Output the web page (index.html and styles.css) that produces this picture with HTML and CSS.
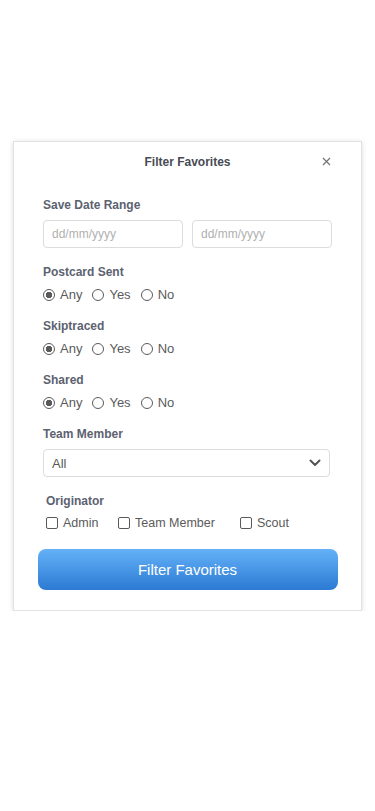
FILE: index.html
```html
<!DOCTYPE html>
<html lang="en">
<head>
  <meta charset="UTF-8" />
  <meta name="viewport" content="width=device-width, initial-scale=1.0"/>
  <title>Filter Favorites</title>
  <link rel="stylesheet" href="styles.css">
</head>
<body>

  <div class="modal">
    <div class="modal-header">
      <h2>Filter Favorites</h2>
      <button class="close" aria-label="Close">
        <svg width="9" height="9" viewBox="0 0 9 9"><path d="M1 1L8 8M8 1L1 8" stroke="#777" stroke-width="1.3" fill="none"/></svg>
      </button>
    </div>

    <div class="modal-body">
      <div class="group input-group">
        <div class="label date-label">Save Date Range</div>
        <div class="date-row">
          <input type="text" placeholder="dd/mm/yyyy" />
          <input type="text" placeholder="dd/mm/yyyy" />
        </div>
      </div>

      <div class="group">
        <div class="label">Postcard Sent</div>
        <div class="options">
          <label><input type="radio" name="postcard" checked /> Any</label>
          <label><input type="radio" name="postcard" /> Yes</label>
          <label><input type="radio" name="postcard" /> No</label>
        </div>
      </div>

      <div class="group">
        <div class="label">Skiptraced</div>
        <div class="options">
          <label><input type="radio" name="skip" checked /> Any</label>
          <label><input type="radio" name="skip" /> Yes</label>
          <label><input type="radio" name="skip" /> No</label>
        </div>
      </div>

      <div class="group">
        <div class="label">Shared</div>
        <div class="options">
          <label><input type="radio" name="shared" checked /> Any</label>
          <label><input type="radio" name="shared" /> Yes</label>
          <label><input type="radio" name="shared" /> No</label>
        </div>
      </div>

      <div class="group input-group">
        <div class="label date-label">Team Member</div>
        <div class="select-wrap">
          <select>
            <option>All</option>
          </select>
          <svg class="chevron" width="12" height="8" viewBox="0 0 12 8"><path d="M1.5 1.5L6 6L10.5 1.5" stroke="#555" stroke-width="2" fill="none" stroke-linecap="round" stroke-linejoin="round"/></svg>
        </div>
      </div>

      <div class="group originator">
        <div class="label">Originator</div>
        <div class="options checks">
          <label><input type="checkbox" /> Admin</label>
          <label><input type="checkbox" /> Team Member</label>
          <label><input type="checkbox" /> Scout</label>
        </div>
      </div>
    </div>

    <button class="submit">Filter Favorites</button>
  </div>

</body>
</html>
```

FILE: styles.css
```css
:root {
  --label: #5c6270;
  --text: #5a5a5a;
  --border: #dcdcdc;
}

* {
  box-sizing: border-box;
}

body {
  margin: 0;
  background: #fff;
  font-family: 'Liberation Sans', Arial, sans-serif;
  color: var(--text);
}

.modal {
  width: 349px;
  margin: 141px auto 0;
  background: #fff;
  border: 1px solid #e2e2e2;
  box-shadow: 0 1px 5px rgba(0,0,0,0.14);
  padding-bottom: 20px;
}

.modal-header {
  position: relative;
  padding-top: 12px;
}

.modal-header h2 {
  margin: 0;
  font-size: 12px;
  line-height: 16px;
  font-weight: bold;
  color: #474b54;
  text-align: center;
}

.close {
  position: absolute;
  top: 15px;
  right: 30px;
  padding: 0;
  border: none;
  background: transparent;
  line-height: 0;
  cursor: pointer;
}

.modal-body {
  padding: 27px 29px 0;
}

.group {
  margin-bottom: 15px;
}

.input-group {
  margin-bottom: 16px;
}

.label {
  font-size: 12px;
  line-height: 16px;
  font-weight: bold;
  color: var(--label);
  margin-bottom: 7px;
}

.date-row {
  display: flex;
  gap: 9px;
}

.date-row input {
  flex: 1;
  min-width: 0;
  height: 28px;
  padding: 0 8px;
  border: 1px solid var(--border);
  border-radius: 4px;
  font-family: inherit;
  font-size: 12px;
  color: var(--text);
}

.date-row input::placeholder {
  color: #b0b0b0;
}

.options {
  display: flex;
  gap: 10px;
  font-size: 13px;
  line-height: 16px;
}

.options label {
  display: flex;
  align-items: center;
  gap: 5px;
}

.options input {
  appearance: none;
  margin: 0;
  width: 12px;
  height: 12px;
  border: 1px solid #5a5a5a;
  background: #fff;
  flex-shrink: 0;
}

.options input[type="radio"] {
  border-radius: 50%;
}

.options input[type="radio"]:checked {
  background: radial-gradient(circle, #5a5a5a 0 3px, #fff 3.5px);
}

.options input[type="checkbox"] {
  border-radius: 2px;
}

.select-wrap {
  position: relative;
  width: 287px;
}

.select-wrap select {
  appearance: none;
  width: 100%;
  height: 28px;
  padding: 0 8px;
  border: 1px solid var(--border);
  border-radius: 4px;
  background: #fff;
  font-family: inherit;
  font-size: 13px;
  color: var(--text);
}

.chevron {
  position: absolute;
  right: 9px;
  top: 10px;
  pointer-events: none;
}

.originator {
  padding-left: 3px;
  margin-bottom: 18px;
}

.originator .label {
  margin-bottom: 6px;
}

.checks {
  display: grid;
  grid-template-columns: 72px 122px auto;
  gap: 0;
  font-size: 12.5px;
}

.submit {
  display: block;
  width: 300px;
  height: 41px;
  margin: 0 auto;
  border: none;
  border-radius: 8px;
  background: linear-gradient(#64b1f8, #2c7ad3);
  color: #fff;
  font-family: inherit;
  font-size: 15px;
  cursor: pointer;
}
```
